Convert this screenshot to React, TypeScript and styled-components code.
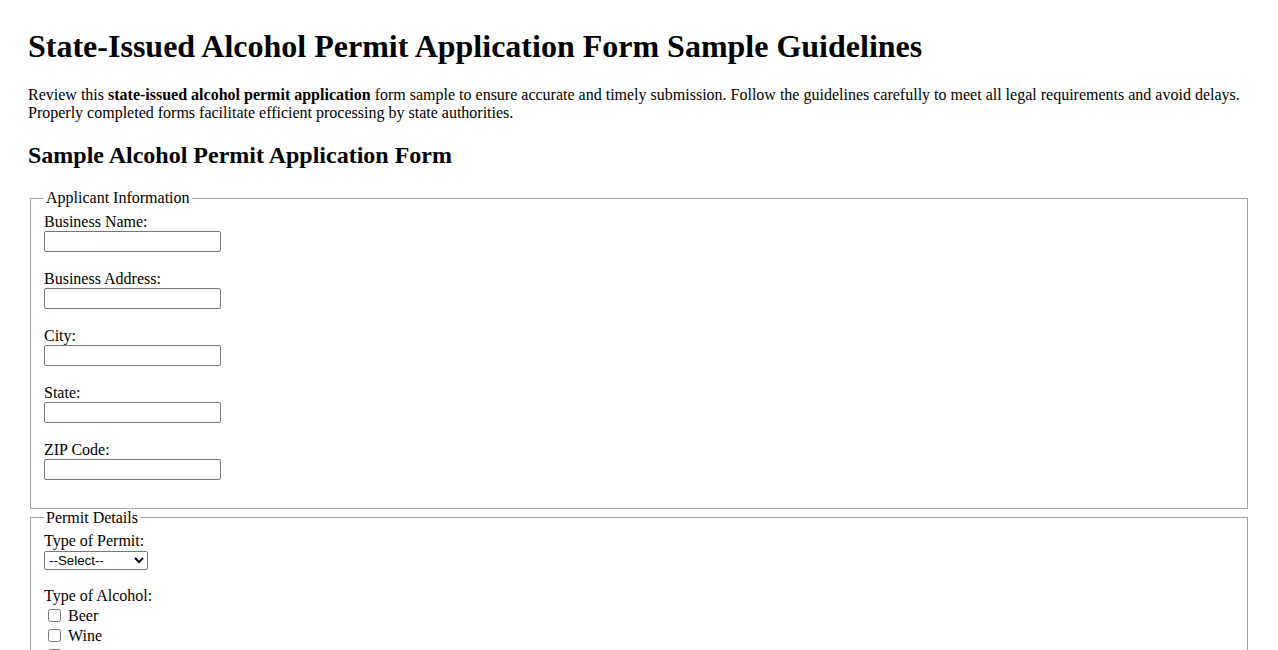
import * as React from "react";
import styled, { createGlobalStyle } from "styled-components";

const GlobalStyle = createGlobalStyle`
  body {
    margin: 0;
    padding: 28px;
    font-family: "Liberation Serif", "Times New Roman", serif;
    font-size: 16px;
    color: #000;
    background: #fff;
  }
`;

const Page = styled.div`
  width: 100%;
`;

const Title = styled.h1`
  font-size: 32px;
  font-weight: bold;
  margin: 0 0 21.44px;
`;

const Intro = styled.p`
  margin: 0 0 16px;
`;

const SectionTitle = styled.h2`
  font-size: 24px;
  font-weight: bold;
  margin: 19.92px 0;
`;

const Group = styled.fieldset`
  margin: 0 2px;
  padding: 5.6px 13px 10px;
  border: 1px solid #a3a3a3;
`;

const Legend = styled.legend`
  padding: 0 2px;
`;

const Field = styled.div`
  margin-bottom: 17.6px;
`;

const Label = styled.label`
  display: block;
  line-height: 18.4px;
`;

const TextInput = styled.input`
  display: block;
  box-sizing: border-box;
  width: 177px;
  height: 21px;
  margin: 0;
  padding: 1px 2px;
  border: 1px solid #767676;
  border-radius: 2px;
  font-family: "Liberation Sans", Arial, sans-serif;
  font-size: 13.33px;
`;

const Select = styled.select`
  display: block;
  box-sizing: border-box;
  width: 104px;
  height: 19px;
  margin: 0;
  border: 1px solid #767676;
  border-radius: 2px;
  font-family: "Liberation Sans", Arial, sans-serif;
  font-size: 13.33px;
  background: #fff;
  color: #000;
`;

const CheckRow = styled.label`
  display: flex;
  align-items: center;
  height: 20px;
`;

const Check = styled.input`
  width: 13px;
  height: 13px;
  margin: 3px 7px 3px 4px;
`;

const applicantFields = [
  "Business Name:",
  "Business Address:",
  "City:",
  "State:",
  "ZIP Code:",
];

const alcoholTypes = ["Beer", "Wine", "Spirits"];

export default function App() {
  return (
    <Page>
      <GlobalStyle />
      <Title>State-Issued Alcohol Permit Application Form Sample Guidelines</Title>
      <Intro>
        Review this <strong>state-issued alcohol permit application</strong> form sample to
        ensure accurate and timely submission. Follow the guidelines carefully to meet all
        legal requirements and avoid delays. Properly completed forms facilitate efficient
        processing by state authorities.
      </Intro>
      <SectionTitle>Sample Alcohol Permit Application Form</SectionTitle>
      <form>
        <Group>
          <Legend>Applicant Information</Legend>
          {applicantFields.map((f) => (
            <Field key={f}>
              <Label>{f}</Label>
              <TextInput type="text" />
            </Field>
          ))}
        </Group>
        <Group>
          <Legend>Permit Details</Legend>
          <Field>
            <Label>Type of Permit:</Label>
            <Select defaultValue="">
              <option value="">--Select--</option>
              <option>Retail</option>
              <option>Wholesale</option>
              <option>Manufacturer</option>
            </Select>
          </Field>
          <Field>
            <Label>Type of Alcohol:</Label>
            {alcoholTypes.map((a) => (
              <CheckRow key={a}>
                <Check type="checkbox" />
                {a}
              </CheckRow>
            ))}
          </Field>
        </Group>
      </form>
    </Page>
  );
}
